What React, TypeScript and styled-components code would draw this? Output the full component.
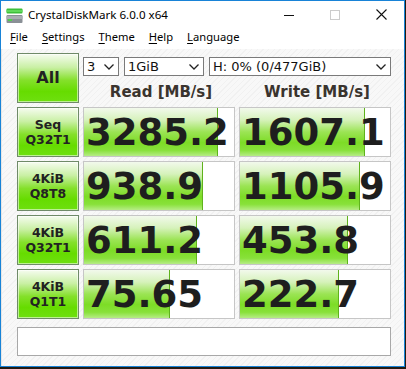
import React from 'react';
import styled, { createGlobalStyle } from 'styled-components';

const GlobalStyle = createGlobalStyle`
  html, body {
    margin: 0;
    padding: 0;
    background: #231b12;
  }
  * {
    box-sizing: border-box;
  }
`;

const Window = styled.div`
  display: flex;
  flex-direction: column;
  width: 405px;
  height: 367px;
  border: 1px solid #1883d7;
  background: #ffffff;
  font-family: 'Noto Sans', 'DejaVu Sans', sans-serif;
`;

const TitleBar = styled.div`
  display: flex;
  align-items: center;
  height: 29px;
  padding-left: 5px;
  background: #ffffff;
`;

const TitleText = styled.div`
  margin-left: 5px;
  font-size: 11.6px;
  color: #000;
  flex: 1;
  margin-top: -3px;
`;

const WinButton = styled.div`
  display: flex;
  align-items: center;
  justify-content: center;
  width: 46px;
  height: 29px;
  margin-top: -2px;
`;

const MenuBar = styled.div`
  display: flex;
  align-items: flex-start;
  height: 19px;
  padding-left: 9px;
  gap: 14px;
  font-size: 11.2px;
  line-height: 14px;
  color: #000;
  background: #ffffff;
`;

const MenuItem = styled.span`
  & u {
    text-decoration: underline;
    text-underline-offset: 2px;
  }
`;

const Client = styled.div`
  flex: 1;
  padding: 4px 13px 8px 15px;
  background: repeating-linear-gradient(
    -45deg,
    #f8f8f8 0px,
    #f8f8f8 3px,
    #f1f1f1 3px,
    #f1f1f1 4px
  );
  border-left: 1px solid #e6e6e6;
`;

const Grid = styled.div`
  display: grid;
  grid-template-columns: 62px 152px 152px;
  column-gap: 4px;
  row-gap: 4px;
  grid-template-rows: 50px 50px 50px 50px 50px;
`;

const TopRight = styled.div`
  grid-column: 2 / 4;
  display: flex;
  flex-direction: column;
  padding-top: 4px;
`;

const SelectRow = styled.div`
  display: flex;
  gap: 5px;
`;

const Select = styled.div<{ $w: number }>`
  display: flex;
  align-items: center;
  justify-content: space-between;
  width: ${(p) => p.$w}px;
  height: 19px;
  padding: 0 4px 0 3px;
  border: 1px solid #7a7a7a;
  background: #ffffff;
  font-family: 'DejaVu Sans', sans-serif;
  font-size: 13px;
  color: #111;
`;

const Headers = styled.div`
  display: grid;
  grid-template-columns: 152px 152px;
  column-gap: 4px;
  margin-top: 7px;
`;

const Header = styled.div`
  text-align: center;
  font-family: 'DejaVu Sans', sans-serif;
  font-weight: bold;
  font-size: 15px;
  color: #3a342e;
  padding-left: 4px;
`;

const GreenButton = styled.div<{ $big?: boolean }>`
  display: flex;
  flex-direction: column;
  align-items: center;
  justify-content: center;
  border: 1px solid #6f8a68;
  box-shadow: inset 0 0 0 1px rgba(255, 255, 255, 0.55);
  background: linear-gradient(
    to bottom,
    #f6fcf0 0%,
    #c9f0a4 28%,
    #84e02a 55%,
    #66dc00 78%,
    #6ee010 100%
  );
  font-family: 'DejaVu Sans', sans-serif;
  font-weight: bold;
  font-size: ${(p) => (p.$big ? '16px' : '12.5px')};
  line-height: ${(p) => (p.$big ? '1' : '15px')};
  color: #222;
  text-align: center;
`;

const Cell = styled.div`
  position: relative;
  overflow: hidden;
  border: 1px solid #c6c6c6;
  background: #ffffff;
`;

const Fill = styled.div`
  position: absolute;
  left: 0;
  top: 0;
  bottom: 0;
  border-right: 1px solid #5fb21c;
  background: linear-gradient(
    to bottom,
    #f2f9ec 0%,
    #d6f2bb 25%,
    #9be454 50%,
    #7ddc26 72%,
    #88e13a 88%,
    #b6ec86 100%
  );
`;

const Value = styled.div`
  position: relative;
  height: 100%;
  display: flex;
  align-items: center;
  padding-left: 2px;
  padding-top: 1px;
  font-family: 'DejaVu Sans', sans-serif;
  font-weight: bold;
  font-size: 37px;
  color: #1e1e1e;
  white-space: nowrap;
`;

const Comment = styled.div`
  height: 29px;
  margin-top: 8px;
  border: 1px solid #a8a8a8;
  background: #ffffff;
`;

const Chevron = () => (
  <svg width="10" height="6" viewBox="0 0 10 6">
    <path d="M0.5 0.5 L5 5 L9.5 0.5" fill="none" stroke="#222" strokeWidth="1.3" />
  </svg>
);

const AppIcon = () => (
  <svg width="17" height="16" viewBox="0 0 17 16">
    <rect x="0.5" y="0.5" width="16" height="5" rx="1" fill="#3cbf3a" />
    <rect x="0.5" y="2" width="16" height="2" fill="#60d85a" />
    <rect x="0.5" y="7" width="16" height="8" rx="1" fill="#8a9096" />
    <rect x="0.5" y="8" width="16" height="3" fill="#a9aeb3" />
    <rect x="2" y="11" width="4" height="2" fill="#4ed04a" />
  </svg>
);

interface RowData {
  l1: string;
  l2: string;
  read: string;
  readPct: number;
  write: string;
  writePct: number;
}

const rows: RowData[] = [
  { l1: 'Seq', l2: 'Q32T1', read: '3285.2', readPct: 89, write: '1607.1', writePct: 83 },
  { l1: '4KiB', l2: 'Q8T8', read: '938.9', readPct: 79, write: '1105.9', writePct: 80 },
  { l1: '4KiB', l2: 'Q32T1', read: '611.2', readPct: 75, write: '453.8', writePct: 72 },
  { l1: '4KiB', l2: 'Q1T1', read: '75.65', readPct: 57, write: '222.7', writePct: 66 },
];

const ResultCell = ({ value, pct }: { value: string; pct: number }) => (
  <Cell>
    <Fill style={{ width: `${pct}%` }} />
    <Value>{value}</Value>
  </Cell>
);

const App = () => {
  return (
    <Window>
      <GlobalStyle />
      <TitleBar>
        <AppIcon />
        <TitleText>CrystalDiskMark 6.0.0 x64</TitleText>
        <WinButton>
          <svg width="10" height="10" viewBox="0 0 10 10">
            <line x1="0" y1="5.5" x2="10" y2="5.5" stroke="#111" strokeWidth="1" />
          </svg>
        </WinButton>
        <WinButton>
          <svg width="10" height="10" viewBox="0 0 10 10">
            <rect x="0.5" y="0.5" width="9" height="9" fill="none" stroke="#cccccc" strokeWidth="1" />
          </svg>
        </WinButton>
        <WinButton>
          <svg width="11" height="11" viewBox="0 0 11 11">
            <path d="M0.5 0.5 L10.5 10.5 M10.5 0.5 L0.5 10.5" stroke="#111" strokeWidth="1.1" />
          </svg>
        </WinButton>
      </TitleBar>
      <MenuBar>
        <MenuItem><u>F</u>ile</MenuItem>
        <MenuItem><u>S</u>ettings</MenuItem>
        <MenuItem><u>T</u>heme</MenuItem>
        <MenuItem><u>H</u>elp</MenuItem>
        <MenuItem><u>L</u>anguage</MenuItem>
      </MenuBar>
      <Client>
        <Grid>
          <GreenButton $big>All</GreenButton>
          <TopRight>
            <SelectRow>
              <Select $w={36}>
                <span>3</span>
                <Chevron />
              </Select>
              <Select $w={80}>
                <span>1GiB</span>
                <Chevron />
              </Select>
              <Select $w={182}>
                <span>H: 0% (0/477GiB)</span>
                <Chevron />
              </Select>
            </SelectRow>
            <Headers>
              <Header>Read [MB/s]</Header>
              <Header>Write [MB/s]</Header>
            </Headers>
          </TopRight>
          {rows.map((r, i) => (
            <React.Fragment key={i}>
              <GreenButton>
                <span>{r.l1}</span>
                <span>{r.l2}</span>
              </GreenButton>
              <ResultCell value={r.read} pct={r.readPct} />
              <ResultCell value={r.write} pct={r.writePct} />
            </React.Fragment>
          ))}
        </Grid>
        <Comment />
      </Client>
    </Window>
  );
};

export default App;
